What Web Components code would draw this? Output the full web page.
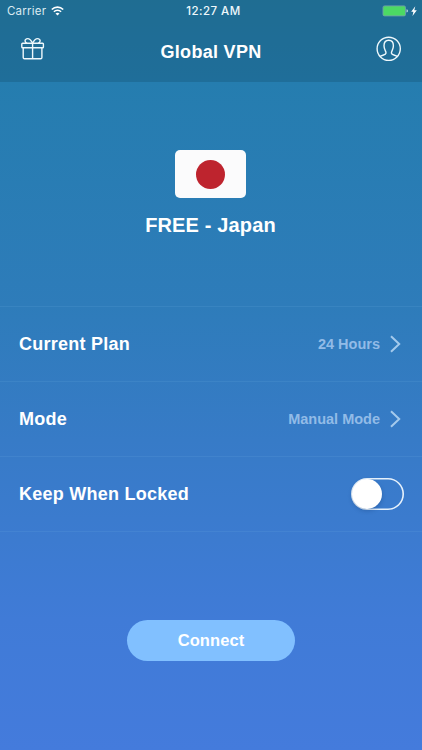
<!DOCTYPE html>
<html lang="en">
<head>
<meta charset="utf-8">
<title>Global VPN</title>
<style>
html,body{margin:0;height:100%}
body{font-family:"Liberation Sans",Arial,sans-serif;color:#fff;overflow:hidden}
</style>
</head>
<body>
<vpn-screen></vpn-screen>
<script>
const define = (name, html) => customElements.define(name, class extends HTMLElement {
  constructor() {
    super();
    this.attachShadow({ mode: 'open' }).innerHTML = html;
  }
});

define('status-bar', `
<style>
:host{display:grid;grid-template-columns:1fr auto 1fr;align-items:center;height:20px;padding:1px 5px 0 7px;box-sizing:border-box;font:11.5px/20px Inter,"Liberation Sans",sans-serif;color:#eef8fb}
.left{display:flex;align-items:center;gap:5px;letter-spacing:.22px;color:#d9eaf1}
.time{font-weight:500;letter-spacing:.45px;padding-left:3px}
.right{display:flex;justify-content:flex-end;align-items:center}
svg{display:block}
</style>
<div class="left"><span>Carrier</span>
<svg width="13" height="10" viewBox="0 0 13 10" fill="none" stroke="#fff" stroke-width="1.6"><path d="M.8 3.5a8 8 0 0 1 11.4 0M2.9 5.8a5.1 5.1 0 0 1 7.2 0"/><path d="M6.5 9.6 4.5 7.6a2.9 2.9 0 0 1 4 0z" fill="#fff" stroke="none"/></svg></div>
<div class="time">12:27 AM</div>
<div class="right">
<svg width="35" height="12" viewBox="0 0 35 12"><rect x="1" y=".9" width="22.5" height="10" rx="1.5" fill="#4cd964" stroke="#6e9fa9" stroke-width=".9"/><path d="M24.5 4.2q1.5.3 1.5 1.7t-1.5 1.7z" fill="#b7d5df"/><path d="M33.3 1.2 29.2 6.8h2.2L30.5 11l4.3-5.8h-2.5z" fill="#fff"/></svg></div>`);

define('nav-bar', `
<style>
:host{display:grid;grid-template-columns:1fr auto 1fr;align-items:center;height:62px;padding:0 20px;box-sizing:border-box}
.right{justify-self:end}
.title{font-size:18px;font-weight:700;line-height:22px;letter-spacing:.3px;padding-top:2px}
::slotted(svg){display:block;margin-bottom:4px}
</style>
<slot name="left"></slot><div class="title"><slot></slot></div><div class="right"><slot name="right"></slot></div>`);

define('server-card', `
<style>
:host{display:flex;flex-direction:column;align-items:center;height:224px;padding:68px 0 0;box-sizing:border-box}
.flag{display:grid;place-items:center;width:71px;height:48px;border-radius:5px;background:#fbfbfc;margin-right:.5px}
.flag i{width:29px;height:29px;border-radius:50%;background:#be242e}
.name{font-size:20px;font-weight:700;line-height:24px;margin:15px 1px 0 0;letter-spacing:.15px}
</style>
<div class="flag"><i></i></div><div class="name"><slot></slot></div>`);

define('setting-row', `
<style>
:host{display:flex;justify-content:space-between;align-items:center;height:75px;padding:0 18px 1px 19px;box-sizing:border-box;border-top:1px solid rgba(120,185,235,.14)}
.label{font-size:18px;font-weight:700;line-height:22px;letter-spacing:.25px}
.value{display:flex;align-items:center;font-size:14.5px;font-weight:700;color:#92bbe7}
</style>
<span class="label"><slot></slot></span><span class="value"><slot name="value"></slot></span>`);

define('chevron-icon', `
<style>:host{display:block;margin:0 3px 0 9px}svg{display:block}</style>
<svg width="12" height="18" viewBox="0 0 12 18" fill="none" stroke="#a4caec" stroke-width="2"><path d="m2 1.3 8.2 7.700-8.200 7.700"/></svg>`);

define('toggle-switch', `
<style>
:host{display:block;width:53px;height:32px;box-sizing:border-box;border-radius:16px;box-shadow:inset 0 0 0 1.6px #e6f1fb;padding:1px}
i{display:block;width:30px;height:30px;border-radius:50%;background:#fff;box-shadow:0 2px 4px rgba(15,50,100,.28)}
</style><i></i>`);

define('connect-button', `
<style>
:host{display:block}
button{display:block;width:168px;height:41px;border:0;padding:0;border-radius:21px;background:#81c0ff;color:#fff;font:700 16.5px/41px "Liberation Sans",Arial,sans-serif;letter-spacing:.1px}
</style><button><slot></slot></button>`);

define('vpn-screen', `
<style>
:host{display:flex;flex-direction:column;width:422px;height:750px;background:linear-gradient(180deg,#247ba4 0,#257daf 82px,#2e7cba 306px,#377bc7 440px,#407bd7 620px,#447bdc 750px)}
header{height:82px;background:rgba(20,75,105,.3)}
.rows{border-bottom:1px solid rgba(120,185,235,.14)}
footer{display:flex;justify-content:center;padding-top:88px}
</style>
<header><status-bar></status-bar>
<nav-bar>
<svg slot="left" width="25" height="24" viewBox="0 0 25 24" fill="none" stroke="#eef8fc" stroke-width="1.4" stroke-linejoin="round"><rect x="1.8" y="6.3" width="21.6" height="4.5" rx=".8"/><path d="M3.2 10.8v9.7q0 1.3 1.3 1.3h16.1q1.3 0 1.3-1.3v-9.7M12.6 6.3v15.5M12.6 6.3C11 3 8.5 1.1 6.5 1.8 4.2 2.6 4.900 5.500 7.100 6.300M12.600 6.300c1.600-3.300 4.100-5.200 6.100-4.500 2.300.8 1.600 3.700-.6 4.500"/></svg>
Global VPN
<svg slot="right" width="26" height="26" viewBox="0 0 26 26" fill="none" stroke="#eef8fc" stroke-width="1.4" stroke-linejoin="round"><circle cx="12.7" cy="12.8" r="11.6"/><path d="M4 20.5C6 18.900 9.800 19.400 10 17.100c.2-2-2-3.300-2-7.300C8 6.200 9.800 4.200 12.700 4.200s4.700 2 4.700 5.600c0 4-2.200 5.300-2 7.300.2 2.300 4 1.800 6 3.400"/></svg>
</nav-bar></header>
<server-card>FREE - Japan</server-card>
<div class="rows">
<setting-row>Current Plan<span slot="value">24 Hours</span><chevron-icon slot="value"></chevron-icon></setting-row>
<setting-row>Mode<span slot="value">Manual Mode</span><chevron-icon slot="value"></chevron-icon></setting-row>
<setting-row>Keep When Locked<toggle-switch slot="value"></toggle-switch></setting-row>
</div>
<footer><connect-button>Connect</connect-button></footer>`);
</script>
</body>
</html>
